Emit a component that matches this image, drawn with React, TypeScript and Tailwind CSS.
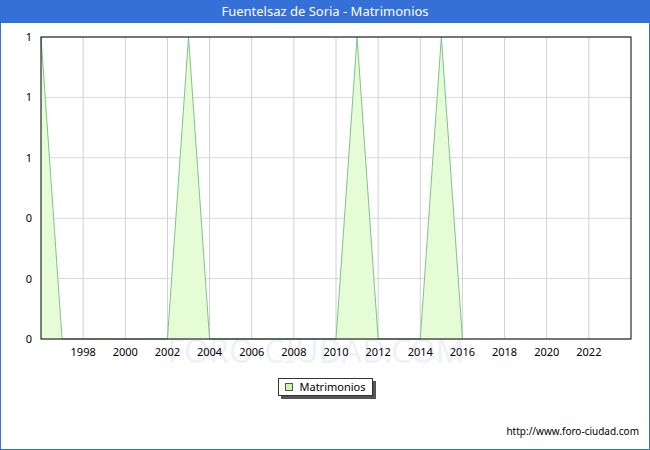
const X0 = 40;
const X1 = 630;
const Y0 = 36;
const Y1 = 338;
const px = (year: number) => X0 + ((year - 1996) * (X1 - X0)) / 28;
const py = (v: number) => Y1 - v * (Y1 - Y0);

const data: [number, number][] = [
  [1996, 1], [1997, 0], [2002, 0], [2003, 1], [2004, 0],
  [2010, 0], [2011, 1], [2012, 0], [2014, 0], [2015, 1], [2016, 0],
];

const yLabels = ['1', '1', '1', '0', '0', '0'];

export default function App() {
  const years = Array.from({ length: 13 }, (_, i) => 1998 + i * 2);
  const line = data.map(([y, v]) => `${px(y)},${py(v)}`).join(' ');
  const area = `${px(1996)},${Y1} ${line} ${px(2016)},${Y1}`;

  return (
    <div className="w-[650px] h-[450px] border border-[#3470d8] bg-white flex flex-col font-['DejaVu_Sans',sans-serif] overflow-hidden">
      <div className="h-[22px] bg-[#3470d8] text-white text-[13px] flex items-center justify-center shrink-0">
        Fuentelsaz de Soria - Matrimonios
      </div>
      <svg width="648" height="342" className="shrink-0 font-['DejaVu_Sans',sans-serif]" viewBox="0 22 648 342">
        <text x="315" y="362" textAnchor="middle" fontSize="32" fill="#eef1f8">FORO-CIUDAD.COM</text>
        {yLabels.map((l, i) => {
          const y = Y0 + (i * (Y1 - Y0)) / 5;
          return (
            <g key={i}>
              <line x1={X0} x2={X1} y1={y} y2={y} stroke="#d8d8d8" />
              <text x="31" y={y + 4} textAnchor="end" fontSize="11" fill="#000">{l}</text>
            </g>
          );
        })}
        {years.map((y) => (
          <g key={y}>
            <line x1={px(y)} x2={px(y)} y1={Y0} y2={Y1} stroke="#d0d0d0" />
            <text x={px(y)} y={355} textAnchor="middle" fontSize="11" fill="#000">{y}</text>
          </g>
        ))}
        <polygon points={area} fill="#e6fcd6" />
        <polyline points={line} fill="none" stroke="#7fc28c" strokeWidth="1" />
        <rect x={X0} y={Y0} width={X1 - X0} height={Y1 - Y0} fill="none" stroke="#000" />
      </svg>
      <div className="flex justify-center mt-[13px]">
        <div className="flex items-center gap-[7px] h-[18px] px-[6px] border border-[#333] bg-white text-[11px] shadow-[3px_3px_0_#555]">
          <span className="w-[8px] h-[8px] border border-[#555] bg-[#ccf7a8]" />
          Matrimonios
        </div>
      </div>
      <div className="mt-auto mb-[10px] mr-[10px] text-right text-[10px] text-black">http://www.foro-ciudad.com</div>
    </div>
  );
}
